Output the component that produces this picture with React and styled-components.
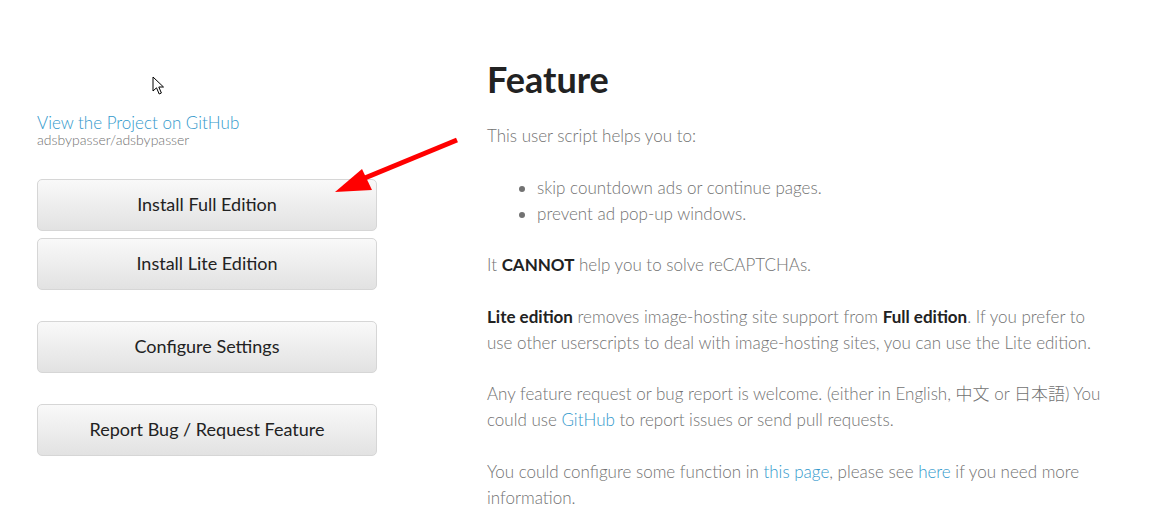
import styled, { createGlobalStyle } from "styled-components";

const GlobalStyle = createGlobalStyle`
  html, body {
    margin: 0;
    padding: 0;
    background: #fff;
  }
  body {
    font-family: Lato, "Noto Sans", "Noto Sans CJK JP", sans-serif;
    font-weight: 300;
    font-size: 17px;
    color: #727272;
  }
`;

const Page = styled.div`
  position: relative;
  width: 1151px;
  height: 526px;
  overflow: hidden;
`;

const Wrapper = styled.div`
  display: flex;
  align-items: flex-start;
  padding-left: 37px;
`;

const Header = styled.header`
  width: 340px;
  padding-top: 112px;
  display: flex;
  flex-direction: column;
`;

const ProjectLink = styled.a`
  color: #39c;
  text-decoration: none;
  font-size: 17px;
  line-height: 22px;
`;

const RepoName = styled.small`
  font-size: 14px;
  line-height: 12px;
  color: #727272;
`;

const ButtonGroup = styled.div`
  display: flex;
  flex-direction: column;
  margin-top: ${(p) => p.$top}px;
  gap: ${(p) => p.$gap}px;
`;

const Button = styled.a`
  display: flex;
  align-items: center;
  justify-content: center;
  height: 50px;
  padding-bottom: 2px;
  box-sizing: border-box;
  height: 52px;
  border: 1px solid #d6d6d6;
  border-radius: 5px;
  background: linear-gradient(#f9f9f9 0%, #e2e2e2 100%);
  color: #222;
  font-size: 18px;
  font-weight: 400;
  text-decoration: none;
`;

const Section = styled.section`
  width: 625px;
  margin-left: 110px;
  padding-top: 59px;
`;

const Title = styled.h1`
  margin: 0 0 24px;
  font-size: 36px;
  line-height: 40px;
  font-weight: 700;
  color: #222;
`;

const Para = styled.p`
  margin: 0 0 25.5px;
  line-height: 26px;
`;

const List = styled.ul`
  margin: 0 0 25.5px;
  padding-left: 50px;
  line-height: 26px;
`;

const Strong = styled.strong`
  font-weight: 700;
  color: #222;
`;

const Link = styled.a`
  color: #39c;
  text-decoration: none;
`;

const Overlay = styled.svg`
  position: absolute;
  left: ${(p) => p.$x}px;
  top: ${(p) => p.$y}px;
  pointer-events: none;
`;

export default function App() {
  return (
    <Page>
      <GlobalStyle />
      <Wrapper>
        <Header>
          <ProjectLink href="#">View the Project on GitHub</ProjectLink>
          <RepoName>adsbypasser/adsbypasser</RepoName>
          <ButtonGroup $top={33} $gap={7}>
            <Button href="#">Install Full Edition</Button>
            <Button href="#">Install Lite Edition</Button>
          </ButtonGroup>
          <ButtonGroup $top={31} $gap={31}>
            <Button href="#">Configure Settings</Button>
            <Button href="#">Report Bug / Request Feature</Button>
          </ButtonGroup>
        </Header>
        <Section>
          <Title>Feature</Title>
          <Para>This user script helps you to:</Para>
          <List>
            <li>skip countdown ads or continue pages.</li>
            <li>prevent ad pop-up windows.</li>
          </List>
          <Para>
            It <Strong>CANNOT</Strong> help you to solve reCAPTCHAs.
          </Para>
          <Para>
            <Strong>Lite edition</Strong> removes image-hosting site support from{" "}
            <Strong>Full edition</Strong>. If you prefer to use other userscripts to
            deal with image-hosting sites, you can use the Lite edition.
          </Para>
          <Para>
            Any feature request or bug report is welcome. (either in English, 中文 or
            日本語) You could use <Link href="#">GitHub</Link> to report issues or send
            pull requests.
          </Para>
          <Para>
            You could configure some function in <Link href="#">this page</Link>, please
            see <Link href="#">here</Link> if you need more information.
          </Para>
        </Section>
      </Wrapper>

      {/* mouse pointer */}
      <Overlay $x={152} $y={76} width="14" height="20" viewBox="0 0 14 20">
        <path
          d="M1 1 L1 15 L4.5 11.8 L7.2 18 L9.4 17 L6.8 11 L11.5 11 Z"
          fill="#fff"
          stroke="#000"
          strokeWidth="1"
          strokeLinejoin="round"
        />
      </Overlay>

      {/* red annotation arrow */}
      <Overlay $x={330} $y={134} width="132" height="64" viewBox="0 0 132 64">
        <line x1="127" y1="6" x2="30" y2="46" stroke="#f00" strokeWidth="5" />
        <polygon points="5,58 32,35 42,56" fill="#f00" />
      </Overlay>
    </Page>
  );
}
